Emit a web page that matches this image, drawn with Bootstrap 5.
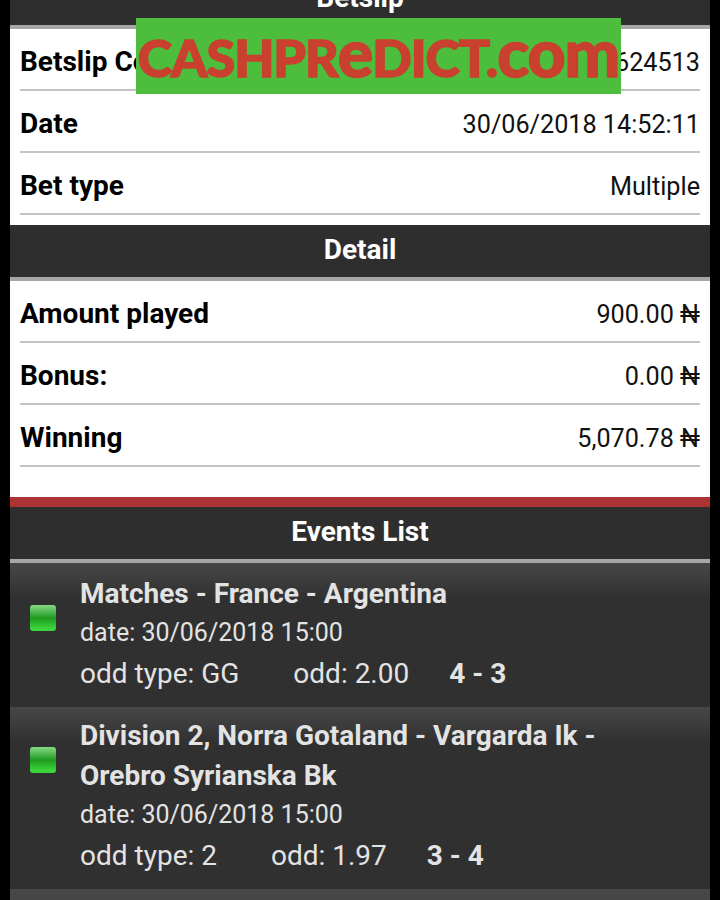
<!DOCTYPE html>
<html lang="en">
<head>
<meta charset="utf-8">
<title>Betslip</title>
<link rel="stylesheet" href="https://cdn.jsdelivr.net/npm/bootstrap@5.3.0/dist/css/bootstrap.min.css">
<style>
html,body{background:#000;height:900px;overflow:hidden}
body{font-family:Roboto,"Liberation Sans",sans-serif;font-size:27px;margin:0}
.sheet{margin:-27px 10px 0;position:relative}
.bar-head{height:56px;background:#2e2e2e;border-bottom:4px solid #a6a6a6;color:#fff;font-weight:700;font-size:28px;line-height:50px;text-align:center}
.pane{background:#fff;padding:0 10px 10px;color:#000}
.pane.tail{padding-bottom:30px}
.info-row{height:62px;border-bottom:2px solid #c4c4c4;line-height:66px}
.info-row b{font-weight:700;font-size:28px}
.info-row span{font-size:25.2px;line-height:68px;color:#111}
.red-rule{height:10px;background:#ab3333}
.evt{background:linear-gradient(#474747 0,#303030 36px);color:#e3e3e3;padding:11px 40px 11px 70px;position:relative}
.evt.two-line{padding-top:9px}
.evt h6{font-family:inherit;font-size:28px;font-weight:700;line-height:40px;margin:0;color:#e3e3e3}
.evt p{font-size:25px;line-height:38px;margin:0}
.evt p.odds{font-size:28px;line-height:44px}
.evt p b{font-weight:700;font-size:28px;color:#e3e3e3}
.led{position:absolute;left:20px;top:42px;width:26px;height:26px;border-radius:3px;background:linear-gradient(#86d986 0,#3fae3f 35%,#1f991f 50%,#3bd43b 90%)}
.evt.two-line .led{top:40px}
.evt-more{height:12px;background:#474747}
.stamp{position:absolute;left:126px;top:45px;width:485px;height:76px;background:#4cbd3c;color:#c9402f;text-align:center;line-height:79px;font-family:Lato,sans-serif;font-weight:900;font-size:52px;white-space:nowrap;letter-spacing:-1px;-webkit-text-stroke:1.5px #c9402f}
.stamp i{font-style:normal;font-size:66px;line-height:0}
.gap-odd{margin-left:54px}
.gap-score{margin-left:40px}
</style>
</head>
<body>
<div class="sheet">
  <div class="bar-head">Betslip</div>
  <div class="pane">
    <div class="info-row d-flex justify-content-between"><b>Betslip Code</b><span>624513</span></div>
    <div class="info-row d-flex justify-content-between"><b>Date</b><span>30/06/2018 14:52:11</span></div>
    <div class="info-row d-flex justify-content-between"><b>Bet type</b><span>Multiple</span></div>
  </div>
  <div class="bar-head">Detail</div>
  <div class="pane tail">
    <div class="info-row d-flex justify-content-between"><b>Amount played</b><span>900.00 ₦</span></div>
    <div class="info-row d-flex justify-content-between"><b>Bonus:</b><span>0.00 ₦</span></div>
    <div class="info-row d-flex justify-content-between"><b>Winning</b><span>5,070.78 ₦</span></div>
  </div>
  <div class="red-rule"></div>
  <div class="bar-head">Events List</div>
  <div class="evt">
    <div class="led"></div>
    <h6>Matches - France - Argentina</h6>
    <p>date: 30/06/2018 15:00</p>
    <p class="odds">odd type: GG<span class="gap-odd">odd: 2.00</span><b class="gap-score">4 - 3</b></p>
  </div>
  <div class="evt two-line">
    <div class="led"></div>
    <h6>Division 2, Norra Gotaland - Vargarda Ik - Orebro Syrianska Bk</h6>
    <p>date: 30/06/2018 15:00</p>
    <p class="odds">odd type: 2<span class="gap-odd">odd: 1.97</span><b class="gap-score">3 - 4</b></p>
  </div>
  <div class="evt-more"></div>
  <div class="stamp">CASHPR<i>e</i>DICT.<i>com</i></div>
</div>
<script src="https://cdn.jsdelivr.net/npm/bootstrap@5.3.0/dist/js/bootstrap.bundle.min.js"></script>
</body>
</html>
